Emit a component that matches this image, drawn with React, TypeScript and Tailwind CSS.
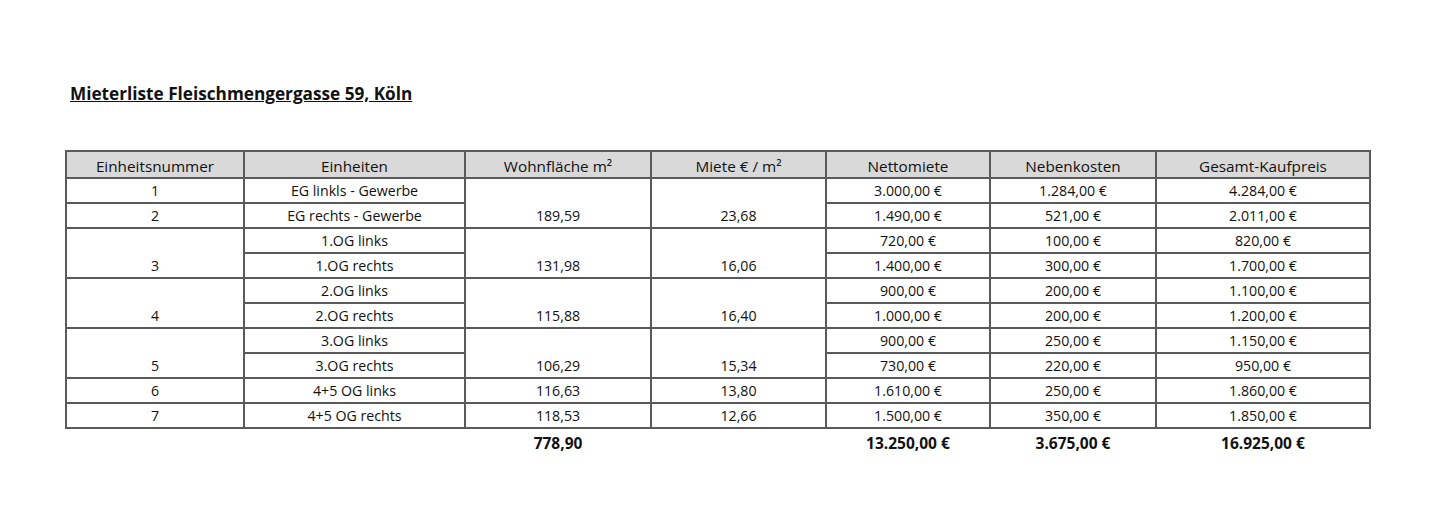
type Row = {
  nr?: { v: string; span: number };
  einheit: string;
  flaeche?: { v: string; span: number };
  miete?: { v: string; span: number };
  netto: string;
  neben: string;
  gesamt: string;
};

const rows: Row[] = [
  { nr: { v: "1", span: 1 }, einheit: "EG linkls - Gewerbe", flaeche: { v: "189,59", span: 2 }, miete: { v: "23,68", span: 2 }, netto: "3.000,00 €", neben: "1.284,00 €", gesamt: "4.284,00 €" },
  { nr: { v: "2", span: 1 }, einheit: "EG rechts - Gewerbe", netto: "1.490,00 €", neben: "521,00 €", gesamt: "2.011,00 €" },
  { nr: { v: "3", span: 2 }, einheit: "1.OG links", flaeche: { v: "131,98", span: 2 }, miete: { v: "16,06", span: 2 }, netto: "720,00 €", neben: "100,00 €", gesamt: "820,00 €" },
  { einheit: "1.OG rechts", netto: "1.400,00 €", neben: "300,00 €", gesamt: "1.700,00 €" },
  { nr: { v: "4", span: 2 }, einheit: "2.OG links", flaeche: { v: "115,88", span: 2 }, miete: { v: "16,40", span: 2 }, netto: "900,00 €", neben: "200,00 €", gesamt: "1.100,00 €" },
  { einheit: "2.OG rechts", netto: "1.000,00 €", neben: "200,00 €", gesamt: "1.200,00 €" },
  { nr: { v: "5", span: 2 }, einheit: "3.OG links", flaeche: { v: "106,29", span: 2 }, miete: { v: "15,34", span: 2 }, netto: "900,00 €", neben: "250,00 €", gesamt: "1.150,00 €" },
  { einheit: "3.OG rechts", netto: "730,00 €", neben: "220,00 €", gesamt: "950,00 €" },
  { nr: { v: "6", span: 1 }, einheit: "4+5 OG links", flaeche: { v: "116,63", span: 1 }, miete: { v: "13,80", span: 1 }, netto: "1.610,00 €", neben: "250,00 €", gesamt: "1.860,00 €" },
  { nr: { v: "7", span: 1 }, einheit: "4+5 OG rechts", flaeche: { v: "118,53", span: 1 }, miete: { v: "12,66", span: 1 }, netto: "1.500,00 €", neben: "350,00 €", gesamt: "1.850,00 €" },
];

const headers = ["Einheitsnummer", "Einheiten", "Wohnfläche m²", "Miete € / m²", "Nettomiete", "Nebenkosten", "Gesamt-Kaufpreis"];
const widths = ["w-[178px]", "w-[221px]", "w-[186px]", "w-[175px]", "w-[164px]", "w-[166px]", "w-[214px]"];

const td = "border-2 border-[#5a5a5a] text-center align-bottom pb-[1px] leading-[20px]";
const total = "text-center align-bottom leading-[20px]";

export default function App() {
  return (
    <div className="w-[1440px] h-[518px] bg-white text-[#111] font-['Open_Sans',sans-serif]">
      <div className="pt-[82px] pl-[70px]">
        <h1 className="text-[17.2px] font-bold underline leading-[24px]">Mieterliste Fleischmengergasse 59, Köln</h1>
      </div>
      <div className="pl-[65px] pt-[44px]">
        <table className="border-collapse text-[14.2px]">
          <colgroup>
            {widths.map((w, i) => <col key={i} className={w} />)}
          </colgroup>
          <thead>
            <tr className="h-[27px] bg-[#d9d9d9]">
              {headers.map(h => <th key={h} className={`${td} font-normal text-[15.3px]`}>{h}</th>)}
            </tr>
          </thead>
          <tbody>
            {rows.map((r, i) => (
              <tr key={i} className="h-[25px]">
                {r.nr && <td rowSpan={r.nr.span} className={td}>{r.nr.v}</td>}
                <td className={td}>{r.einheit}</td>
                {r.flaeche && <td rowSpan={r.flaeche.span} className={td}>{r.flaeche.v}</td>}
                {r.miete && <td rowSpan={r.miete.span} className={td}>{r.miete.v}</td>}
                <td className={td}>{r.netto}</td>
                <td className={td}>{r.neben}</td>
                <td className={td}>{r.gesamt}</td>
              </tr>
            ))}
            <tr className="h-[25px] font-bold text-[15.5px]">
              <td></td>
              <td></td>
              <td className={total}>778,90</td>
              <td></td>
              <td className={total}>13.250,00 €</td>
              <td className={total}>3.675,00 €</td>
              <td className={total}>16.925,00 €</td>
            </tr>
          </tbody>
        </table>
      </div>
    </div>
  );
}
